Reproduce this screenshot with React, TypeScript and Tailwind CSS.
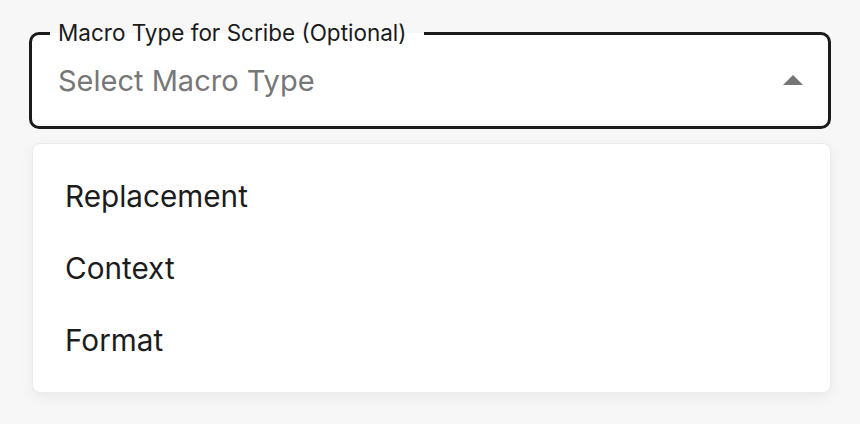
import React from "react";

const options = ["Replacement", "Context", "Format"];

const MacroTypeSelect = () => {
  return (
    <div className="min-h-[424px] w-[860px] bg-[#f7f7f7] pt-[32px] font-['Inter',sans-serif]">
      {/* Select field */}
      <div className="relative mx-[29px] flex h-[97px] items-center rounded-[10px] border-[3px] border-[#1b1b1b] bg-white pl-[26px] pr-[11px]">
        <span className="absolute -top-[16px] left-[18px] bg-[linear-gradient(to_bottom,#f7f7f7_50%,#ffffff_50%)] pl-2 pr-[17px] text-[22.5px] leading-[28px] text-[#1b1b1b]">
          Macro Type for Scribe (Optional)
        </span>
        <span className="text-[29px] leading-none text-[#777777]">
          Select Macro Type
        </span>
        <svg
          viewBox="0 0 24 24"
          className="ml-auto h-12 w-12 fill-[#757575]"
        >
          <path d="m7 14 5-5 5 5z" />
        </svg>
      </div>

      {/* Menu */}
      <ul className="ml-[32px] mt-[14px] w-[799px] rounded-[8px] border border-[#ececec] bg-white py-4 shadow-[0_4px_14px_rgba(0,0,0,0.06)]">
        {options.map((option) => (
          <li
            key={option}
            className="flex h-[72px] items-center px-[32px] text-[29.7px] text-[#1c1c1c]"
          >
            {option}
          </li>
        ))}
      </ul>
    </div>
  );
};

export default function App() {
  return <MacroTypeSelect />;
}
